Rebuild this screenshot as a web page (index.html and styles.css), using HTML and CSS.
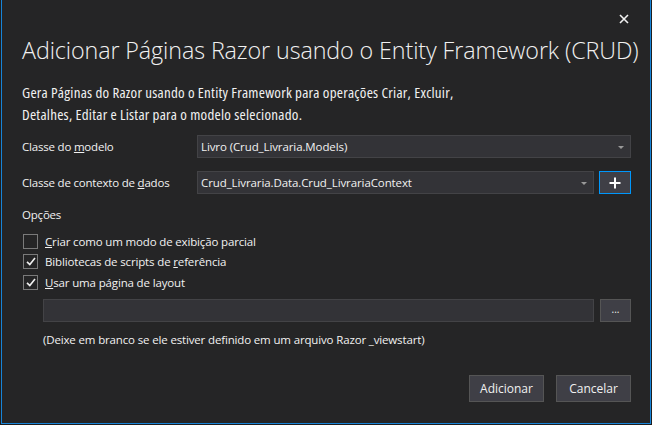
FILE: index.html
```html
<!DOCTYPE html>
<html lang="pt-BR">
<head>
<meta charset="utf-8">
<title>Adicionar Páginas Razor</title>
<link rel="stylesheet" href="styles.css">
</head>
<body>
<div class="dialog">
  <div class="topbar">
    <button class="close" aria-label="Fechar">
      <svg width="10" height="10" viewBox="0 0 10 10"><path d="M1 1 L9 9 M9 1 L1 9" stroke="#f1f1f1" stroke-width="1.6" fill="none"/></svg>
    </button>
  </div>
  <h1 class="title">Adicionar Páginas Razor usando o Entity Framework (CRUD)</h1>
  <p class="desc">Gera Páginas do Razor usando o Entity Framework para operações Criar, Excluir, Detalhes, Editar e Listar para o modelo selecionado.</p>

  <div class="form">
    <div class="row">
      <span class="label">Classe do <u>m</u>odelo</span>
      <div class="select wide">
        <span class="value">Livro (Crud_Livraria.Models)</span>
        <span class="arrow"></span>
      </div>
    </div>
    <div class="row">
      <span class="label">Classe de contexto de <u>d</u>ados</span>
      <div class="ctrl-pair">
        <div class="select grow">
          <span class="value">Crud_Livraria.Data.Crud_LivrariaContext</span>
          <span class="arrow"></span>
        </div>
        <button class="plus" aria-label="Adicionar contexto">
          <svg width="12" height="12" viewBox="0 0 12 12"><path d="M6 0.5 V11.5 M0.5 6 H11.5" stroke="#ffffff" stroke-width="2" fill="none"/></svg>
        </button>
      </div>
    </div>
  </div>

  <div class="options-title">Opções</div>
  <div class="checks">
    <label class="check"><span class="box"></span><span><u>C</u>riar como um modo de exibição parcial</span></label>
    <label class="check"><span class="box on"><svg width="10" height="9" viewBox="0 0 10 9"><path d="M1 4.8 L3.8 7.5 L9 1" stroke="#f1f1f1" stroke-width="1.6" fill="none"/></svg></span><span>Bibliotecas de scripts de <u>r</u>eferência</span></label>
    <label class="check"><span class="box on"><svg width="10" height="9" viewBox="0 0 10 9"><path d="M1 4.8 L3.8 7.5 L9 1" stroke="#f1f1f1" stroke-width="1.6" fill="none"/></svg></span><span><u>U</u>sar uma página de layout</span></label>
  </div>

  <div class="layout-row">
    <div class="textbox"></div>
    <button class="browse">...</button>
  </div>
  <p class="hint">(Deixe em branco se ele estiver definido em um arquivo Razor _viewstart)</p>

  <div class="actions">
    <button class="btn">Adicionar</button>
    <button class="btn">Cancelar</button>
  </div>
</div>
</body>
</html>
```
FILE: styles.css
```css
html, body {
  margin: 0;
  padding: 0;
  background: #1e1e1e;
}
body {
  font-family: "Open Sans", "Noto Sans", "Liberation Sans", sans-serif;
  color: #f1f1f1;
  width: 652px;
  height: 425px;
  overflow: hidden;
}
.dialog {
  box-sizing: border-box;
  margin-left: 1px;
  width: 650px;
  height: 424px;
  background: #252526;
  border: 1px solid #1784d8;
  border-top: 0;
  padding: 0 19px 0 20px;
  display: flex;
  flex-direction: column;
}
.topbar {
  height: 34px;
  display: flex;
  justify-content: flex-end;
  align-items: flex-start;
}
.close {
  background: none;
  border: 0;
  padding: 0;
  margin: 13px 1px 0 0;
  width: 12px;
  height: 12px;
  display: flex;
  align-items: center;
  justify-content: center;
}
.title {
  margin: 0;
  font-weight: 300;
  font-size: 23.3px;
  line-height: 32px;
  letter-spacing: -0.1px;
  white-space: nowrap;
}
.desc {
  margin: 15px 0 0;
  font-size: 15px;
  line-height: 22px;
  width: 455px;
  font-stretch: 87%;
  letter-spacing: 0.25px;
}
.form {
  margin-top: 10px;
  display: flex;
  flex-direction: column;
  gap: 13px;
}
.row {
  display: grid;
  grid-template-columns: 175px 1fr;
  align-items: center;
}
.label, .options-title, .check, .hint {
  font-size: 11.5px;
  letter-spacing: -0.2px;
}
.select {
  box-sizing: border-box;
  height: 23px;
  background: #333337;
  border: 1px solid #434346;
  display: flex;
  align-items: center;
  padding: 0 6px 0 3px;
  font-size: 11.5px;
  letter-spacing: -0.1px;
}
.select .value { flex: 1; white-space: nowrap; }
.arrow {
  width: 0;
  height: 0;
  border-left: 3px solid transparent;
  border-right: 3px solid transparent;
  border-top: 3px solid #999999;
  margin-top: 2px;
}
.ctrl-pair {
  display: flex;
  gap: 5px;
}
.grow { flex: 1; }
.plus {
  box-sizing: border-box;
  width: 32px;
  height: 23px;
  background: #3f3f46;
  border: 1px solid #0097fb;
  padding: 0;
  display: flex;
  align-items: center;
  justify-content: center;
}
.options-title {
  margin-top: 13px;
  line-height: 16px;
}
.checks {
  margin-top: 10px;
  display: flex;
  flex-direction: column;
  gap: 4.5px;
}
.check {
  display: flex;
  align-items: center;
  gap: 7px;
  height: 16px;
  margin-left: 1px;
}
.check span:last-child, .hint { font-stretch: 98%; letter-spacing: -0.15px; }
.box {
  box-sizing: border-box;
  width: 15px;
  height: 15px;
  border: 1px solid #7a7a7a;
  background: #252526;
  display: flex;
  align-items: center;
  justify-content: center;
}
.layout-row {
  margin: 9px 0 0 21px;
  display: flex;
  gap: 6px;
}
.textbox {
  box-sizing: border-box;
  flex: 1;
  height: 23px;
  background: #333337;
  border: 1px solid #434346;
}
.browse {
  box-sizing: border-box;
  width: 31px;
  height: 23px;
  background: #3f3f46;
  border: 1px solid #555555;
  color: #f1f1f1;
  font-family: inherit;
  font-size: 10px;
  padding: 0 0 4px;
  line-height: 10px;
}
.hint {
  margin: 10px 0 0 21px;
  line-height: 16px;
}
.actions {
  margin-top: 27px;
  display: flex;
  justify-content: flex-end;
  gap: 12px;
}
.btn {
  box-sizing: border-box;
  width: 75px;
  height: 27px;
  background: #3f3f46;
  border: 1px solid #555555;
  color: #f1f1f1;
  font-family: inherit;
  font-size: 12px;
  padding: 0;
}
```
